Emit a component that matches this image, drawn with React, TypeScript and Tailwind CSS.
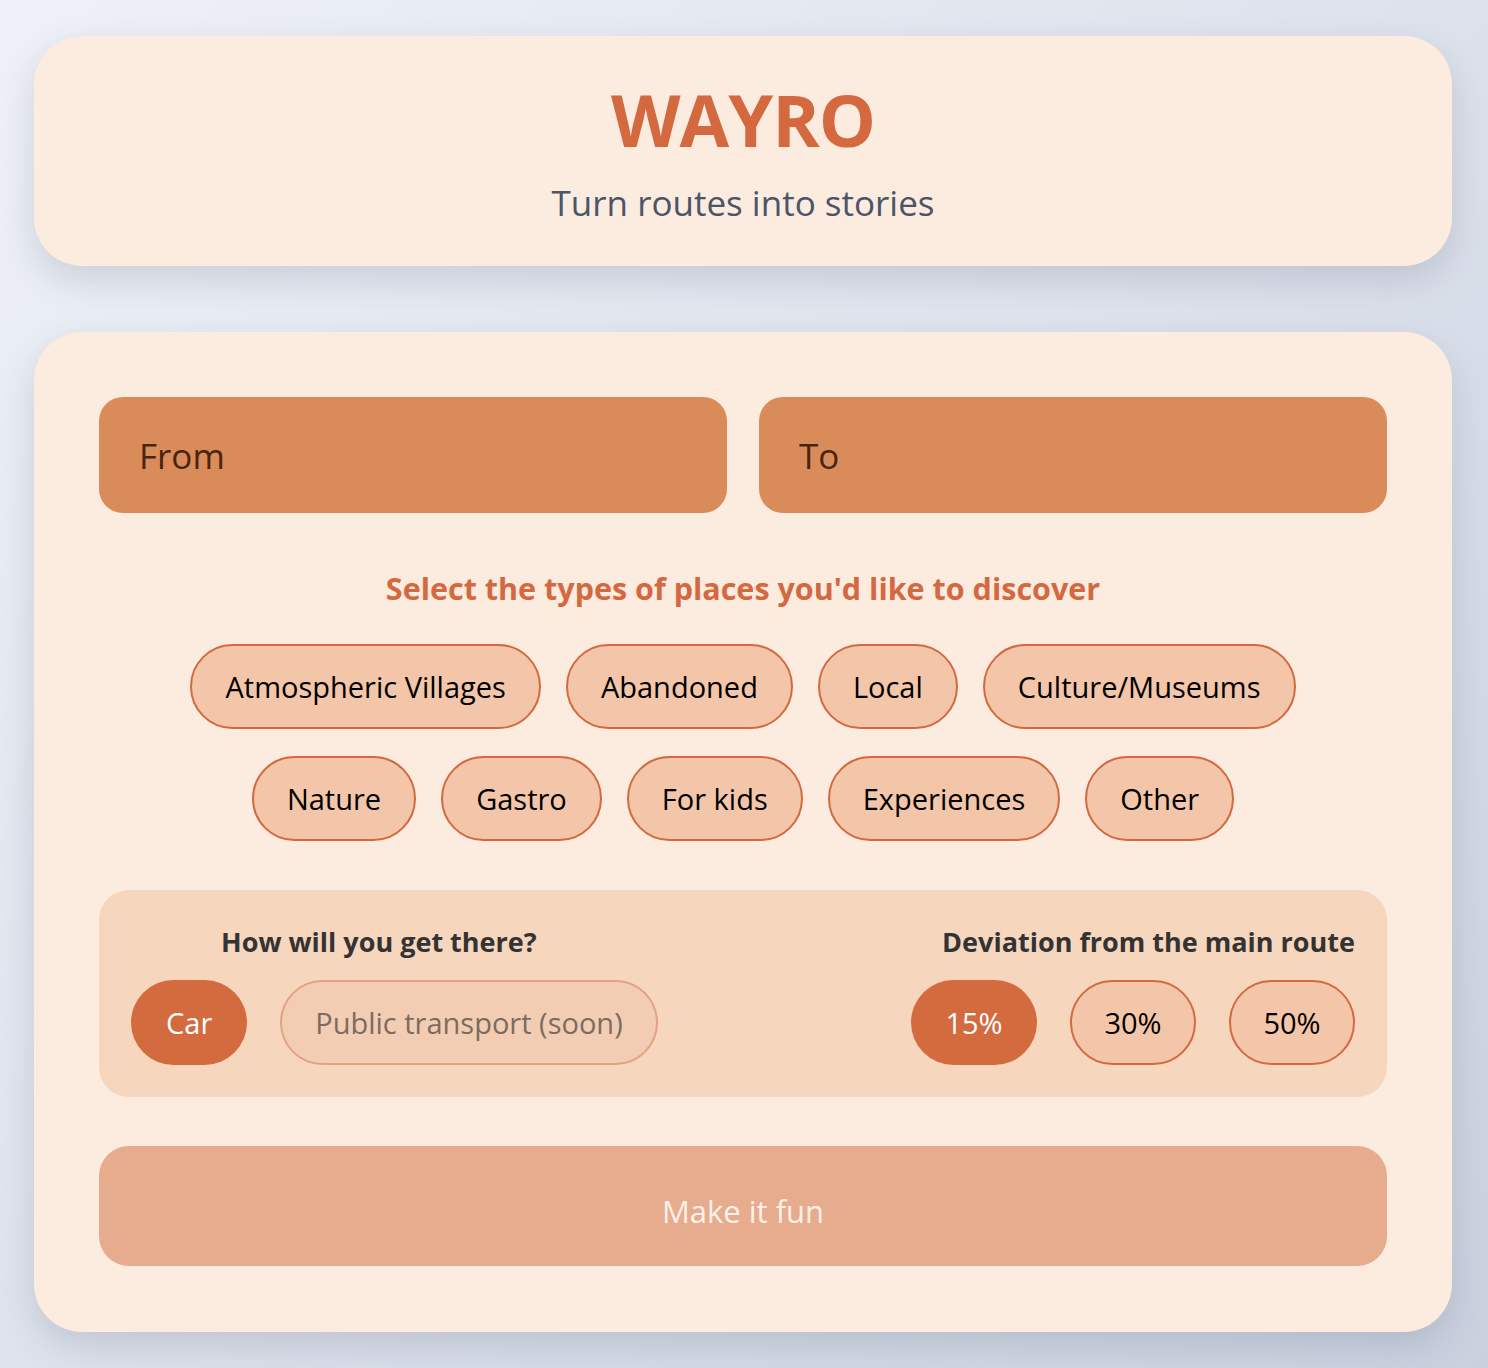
import { useState } from 'react';

const font = { fontFamily: '"Open Sans", "Noto Sans", Arial, sans-serif' };

const categories = [
  'Atmospheric Villages',
  'Abandoned',
  'Local',
  'Culture/Museums',
  'Nature',
  'Gastro',
  'For kids',
  'Experiences',
  'Other',
];

const deviations = ['15%', '30%', '50%'];

export default function App() {
  const [from, setFrom] = useState('');
  const [to, setTo] = useState('');
  const [picked, setPicked] = useState<string[]>([]);
  const [deviation, setDeviation] = useState('15%');

  const toggle = (c: string) =>
    setPicked(p => (p.includes(c) ? p.filter(x => x !== c) : [...p, c]));

  return (
    <div
      style={font}
      className="min-h-screen w-full bg-[linear-gradient(135deg,#eef1f7_0%,#dde2ec_50%,#c9d1df_100%)] pl-[34px] pr-[36px] pt-[36px] pb-[36px]"
    >
      {/* header */}
      <div className="rounded-[48px] bg-[#fcebdf] pt-[40px] pb-[36px] text-center shadow-[0_14px_34px_rgba(70,80,100,0.18)]">
        <h1 className="text-[72px] font-bold leading-[1.2] tracking-[-1px] text-[#d4693f]">WAYRO</h1>
        <p className="mt-[14px] text-[35px] leading-[54px] text-[#4a5568]">Turn routes into stories</p>
      </div>

      {/* planner */}
      <div className="mt-[66px] rounded-[48px] bg-[#fcebdf] px-[65px] pt-[65px] pb-[66px] shadow-[0_14px_34px_rgba(70,80,100,0.18)]">
        <div className="flex gap-[32px]">
          <input
            value={from}
            onChange={e => setFrom(e.target.value)}
            placeholder="From"
            className="h-[116px] flex-1 rounded-[24px] bg-[#d98b5a] px-[40px] text-[35px] text-[#4a2410] placeholder:text-[#4a2410] focus:outline-none"
          />
          <input
            value={to}
            onChange={e => setTo(e.target.value)}
            placeholder="To"
            className="h-[116px] flex-1 rounded-[24px] bg-[#d98b5a] px-[40px] text-[35px] text-[#4a2410] placeholder:text-[#4a2410] focus:outline-none"
          />
        </div>

        <h2 className="mt-[55px] text-center text-[30.5px] font-bold leading-[40px] text-[#d4693f]">
          Select the types of places you'd like to discover
        </h2>

        <div className="mx-auto mt-[36px] flex max-w-[1200px] flex-wrap justify-center gap-x-[25px] gap-y-[27px]">
          {categories.map(c => (
            <button
              key={c}
              onClick={() => toggle(c)}
              className={`h-[85px] rounded-full border-2 border-[#d4693f] px-[33px] text-[29px] ${
                picked.includes(c) ? 'bg-[#d46b3f] text-white' : 'bg-[#f3c6a9] text-black'
              }`}
            >
              {c}
            </button>
          ))}
        </div>

        {/* transport + deviation */}
        <div className="mt-[49px] flex justify-between rounded-[30px] bg-[#f6d6bd] px-[32px] py-[32px]">
          <div className="flex flex-col">
            <p className="ml-[90px] text-[27px] font-bold leading-[40px] text-[#333333]">How will you get there?</p>
            <div className="mt-[18px] flex gap-[33px]">
              <button className="h-[85px] rounded-full bg-[#d46b3f] px-[35px] text-[29px] text-white">Car</button>
              <button
                disabled
                className="h-[85px] rounded-full border-2 border-[#e2a283] bg-[#f3cdb3] px-[33px] text-[29px] text-[#7d6b60]"
              >
                Public transport (soon)
              </button>
            </div>
          </div>

          <div className="flex flex-col items-end">
            <p className="text-[27px] font-bold leading-[40px] text-[#333333]">Deviation from the main route</p>
            <div className="mt-[18px] flex gap-[33px]">
              {deviations.map(d => (
                <button
                  key={d}
                  onClick={() => setDeviation(d)}
                  className={`h-[85px] w-[126px] rounded-full text-[29px] ${
                    deviation === d
                      ? 'bg-[#d46b3f] text-white'
                      : 'border-2 border-[#d4693f] bg-[#f3c6a9] text-black'
                  }`}
                >
                  {d}
                </button>
              ))}
            </div>
          </div>
        </div>

        <button className="mt-[49px] h-[120px] w-full rounded-[30px] bg-[#e7ab8d] pt-[10px] text-[31px] text-[#fdf1e9]">
          Make it fun
        </button>
      </div>
    </div>
  );
}
